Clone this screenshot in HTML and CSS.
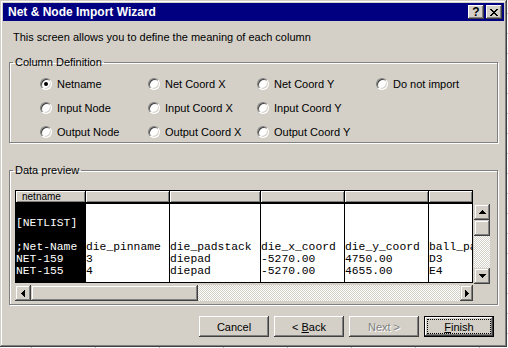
FILE: index.html
```html
<!DOCTYPE html>
<html>
    <head>
        <title>Net &amp; Node Import Wizard</title>
        <meta charset="UTF-8">
        <link rel="stylesheet" href="styles.css">
    </head>
    <body>
        <div class="window">
            <div class="titlebar">
                <span class="title">Net &amp; Node Import Wizard</span>
                <div class="cap-btns">
                    <span class="cap-btn help">?</span>
                    <span class="cap-btn">
                        <svg width="8" height="7" viewBox="0 0 8 7" shape-rendering="crispEdges">
                            <path d="M0 0h2v1H0z M6 0h2v1H6z M1 1h2v1H1z M5 1h2v1H5z M2 2h4v1H2z M3 3h2v1H3z M2 4h4v1H2z M1 5h2v1H1z M5 5h2v1H5z M0 6h2v1H0z M6 6h2v1H6z" fill="#000"/>
                        </svg>
                    </span>
                </div>
            </div>

            <p class="intro">This screen allows you to define the meaning of each column</p>

            <!-- Назначение колонок -->
            <fieldset class="group">
                <legend>Column Definition</legend>
                <div class="opts">
                    <label class="opt"><span class="radio on"></span>Netname</label>
                    <label class="opt"><span class="radio"></span>Net Coord X</label>
                    <label class="opt"><span class="radio"></span>Net Coord Y</label>
                    <label class="opt"><span class="radio"></span>Do not import</label>
                    <label class="opt"><span class="radio"></span>Input Node</label>
                    <label class="opt"><span class="radio"></span>Input Coord X</label>
                    <label class="opt"><span class="radio"></span>Input Coord Y</label>
                    <span></span>
                    <label class="opt"><span class="radio"></span>Output Node</label>
                    <label class="opt"><span class="radio"></span>Output Coord X</label>
                    <label class="opt"><span class="radio"></span>Output Coord Y</label>
                </div>
            </fieldset>

            <!-- Предпросмотр данных -->
            <fieldset class="group preview">
                <legend>Data preview</legend>
                <div class="grid">
                    <div class="grid-head">
                        <div class="head-cell">netname</div>
                        <div class="head-cell"></div>
                        <div class="head-cell"></div>
                        <div class="head-cell"></div>
                        <div class="head-cell"></div>
                        <div class="head-cell"></div>
                    </div>
                    <div class="grid-body">
                        <div class="grid-main">
                            <div class="grid-rows">
                                <div class="cell sel"><br>[NETLIST]<br><br>;Net-Name<br>NET-159<br>NET-155</div>
                                <div class="cell"><br><br><br>die_pinname<br>3<br>4</div>
                                <div class="cell"><br><br><br>die_padstack<br>diepad<br>diepad</div>
                                <div class="cell"><br><br><br>die_x_coord<br>-5270.00<br>-5270.00</div>
                                <div class="cell"><br><br><br>die_y_coord<br>4750.00<br>4655.00</div>
                                <div class="cell"><br><br><br>ball_pad<br>D3<br>E4</div>
                            </div>
                            <div class="hscroll">
                                <span class="sb-btn">
                                    <svg width="4" height="7" viewBox="0 0 4 7" shape-rendering="crispEdges"><path d="M3 0h1v7h-1z M2 1h1v5h-1z M1 2h1v3h-1z M0 3h1v1h-1z" fill="#000"/></svg>
                                </span>
                                <span class="sb-thumb h-thumb"></span>
                                <span class="sb-track"></span>
                                <span class="sb-btn narrow">
                                    <svg width="4" height="7" viewBox="0 0 4 7" shape-rendering="crispEdges"><path d="M0 0h1v7h-1z M1 1h1v5h-1z M2 2h1v3h-1z M3 3h1v1h-1z" fill="#000"/></svg>
                                </span>
                            </div>
                        </div>
                        <div class="vscroll">
                            <span class="sb-btn">
                                <svg width="7" height="4" viewBox="0 0 7 4" shape-rendering="crispEdges"><path d="M3 0h1v1h-1z M2 1h3v1h-3z M1 2h5v1h-5z M0 3h7v1h-7z" fill="#000"/></svg>
                            </span>
                            <span class="sb-thumb"></span>
                            <span class="sb-track"></span>
                            <span class="sb-btn">
                                <svg width="7" height="4" viewBox="0 0 7 4" shape-rendering="crispEdges"><path d="M0 0h7v1h-7z M1 1h5v1h-5z M2 2h3v1h-3z M3 3h1v1h-1z" fill="#000"/></svg>
                            </span>
                        </div>
                    </div>
                </div>
            </fieldset>

            <div class="actions">
                <button class="btn">Cancel</button>
                <button class="btn">&lt; <u>B</u>ack</button>
                <button class="btn" disabled>Next &gt;</button>
                <button class="btn default"><u>F</u>inish</button>
            </div>
        </div>
    </body>
</html>
```

FILE: styles.css
```css
/* Общие стили */
body {
    margin: 0;
    font-family: "Liberation Sans", Arial, sans-serif;
    font-size: 11px;
    color: #000;
    background-color: #fff;
    background-image: linear-gradient(90deg, #c0c0c0 1px, transparent 1px), linear-gradient(#c0c0c0 1px, transparent 1px);
    background-size: 64px 100%, 100% 20px;
    background-position: 31px 0, 0 13px;
}

/* Окно */
.window {
    width: 507px;
    height: 347px;
    box-sizing: border-box;
    padding: 3px;
    background: #d4d0c8;
    box-shadow: inset -1px -1px #404040, inset 1px 1px #d4d0c8, inset -2px -2px #808080, inset 2px 2px #fff;
}
.titlebar {
    height: 18px;
    display: flex;
    align-items: center;
    justify-content: space-between;
    background: #000080;
    color: #fff;
}
.title {
    padding-left: 5px;
    font-size: 12px;
    font-weight: bold;
}
.cap-btns {
    display: flex;
    gap: 2px;
    margin-right: 2px;
}
.cap-btn {
    width: 16px;
    height: 14px;
    box-sizing: border-box;
    display: flex;
    align-items: center;
    justify-content: center;
    background: #d4d0c8;
    box-shadow: inset -1px -1px #404040, inset 1px 1px #fff, inset -2px -2px #808080;
}
.cap-btn.help {
    color: #000;
    font-size: 12px;
    font-weight: bold;
    line-height: 14px;
}
.intro {
    margin: 0;
    padding: 10px 0 0 10px;
    line-height: 13px;
}

/* Групповые рамки */
.group {
    margin: 12px 6px 0;
    padding: 7px 0 2px;
    border: 1px solid #808080;
    box-shadow: 1px 1px 0 #fff, inset 1px 1px 0 #fff;
}
.group legend {
    margin-left: 3px;
    padding: 0 2px;
    line-height: 13px;
}
.opts {
    display: grid;
    grid-template-columns: 108px 109px 119px auto;
    row-gap: 8px;
    margin-left: 30px;
}
.opt {
    height: 16px;
    display: flex;
    align-items: center;
    gap: 5px;
}
.radio {
    flex: none;
    width: 12px;
    height: 12px;
    box-sizing: border-box;
    display: flex;
    align-items: center;
    justify-content: center;
    border: 1px solid;
    border-color: #808080 #fff #fff #808080;
    border-radius: 50%;
    background: #fff;
    box-shadow: inset 1px 1px 0 #404040, inset -1px -1px 0 #d4d0c8;
}
.radio.on::after {
    content: "";
    width: 4px;
    height: 4px;
    border-radius: 50%;
    background: #000;
}

/* Таблица предпросмотра */
.group.preview {
    margin-top: 21px;
    padding: 13px 0 3px;
}
.grid {
    width: 475px;
    margin-left: 5px;
}
.grid-head, .grid-rows {
    width: 458px;
    box-sizing: border-box;
    display: grid;
    grid-template-columns: 69px 83px 90px 83px 83px 43px;
    column-gap: 1px;
    background: #000;
}
.grid-head {
    padding: 1px 1px 2px;
}
.head-cell {
    height: 11px;
    padding-left: 6px;
    overflow: hidden;
    background: #d4d0c8;
    box-shadow: inset 1px 1px #fff, inset -1px -1px #808080;
    font-size: 10px;
    line-height: 11px;
}
.grid-rows {
    padding: 0 1px 1px;
}
.cell {
    height: 78px;
    box-sizing: border-box;
    padding-top: 1px;
    overflow: hidden;
    white-space: nowrap;
    background: #fff;
    font-family: "Liberation Mono", "Courier New", monospace;
    font-size: 11.33px;
    line-height: 12px;
}
.cell.sel {
    background: #000;
    color: #fff;
}
.grid-body {
    display: flex;
    align-items: flex-start;
}
.grid-main {
    width: 458px;
}

/* Полосы прокрутки */
.hscroll {
    height: 16px;
    margin-top: 2px;
    display: flex;
}
.vscroll {
    width: 16px;
    height: 80px;
    margin-left: 1px;
    display: flex;
    flex-direction: column;
}
.sb-btn, .sb-thumb {
    flex: none;
    width: 16px;
    height: 16px;
    box-sizing: border-box;
    display: flex;
    align-items: center;
    justify-content: center;
    background: #d4d0c8;
    box-shadow: inset -1px -1px #404040, inset 1px 1px #d4d0c8, inset -2px -2px #808080, inset 2px 2px #fff;
}
.sb-btn.narrow {
    width: 13px;
}
.sb-thumb.h-thumb {
    width: 167px;
}
.sb-track {
    flex: 1;
    background: repeating-conic-gradient(#d4d0c8 0 25%, #fff 0 50%) 0 0 / 2px 2px;
}

/* Кнопки мастера */
.actions {
    display: flex;
    justify-content: flex-end;
    gap: 5px;
    margin-top: 11px;
    padding-right: 10px;
}
.btn {
    width: 70px;
    height: 21px;
    box-sizing: border-box;
    margin: 0;
    padding: 0;
    border: 0;
    background: #d4d0c8;
    font-family: "Liberation Sans", Arial, sans-serif;
    font-size: 11px;
    color: #000;
    box-shadow: inset -1px -1px #404040, inset 1px 1px #fff, inset -2px -2px #808080;
}
.btn:disabled {
    color: #808080;
    text-shadow: 1px 1px 0 #fff;
}
.btn.default {
    border: 1px solid #000;
    outline: 1px dotted #000;
    outline-offset: -4px;
}
```
